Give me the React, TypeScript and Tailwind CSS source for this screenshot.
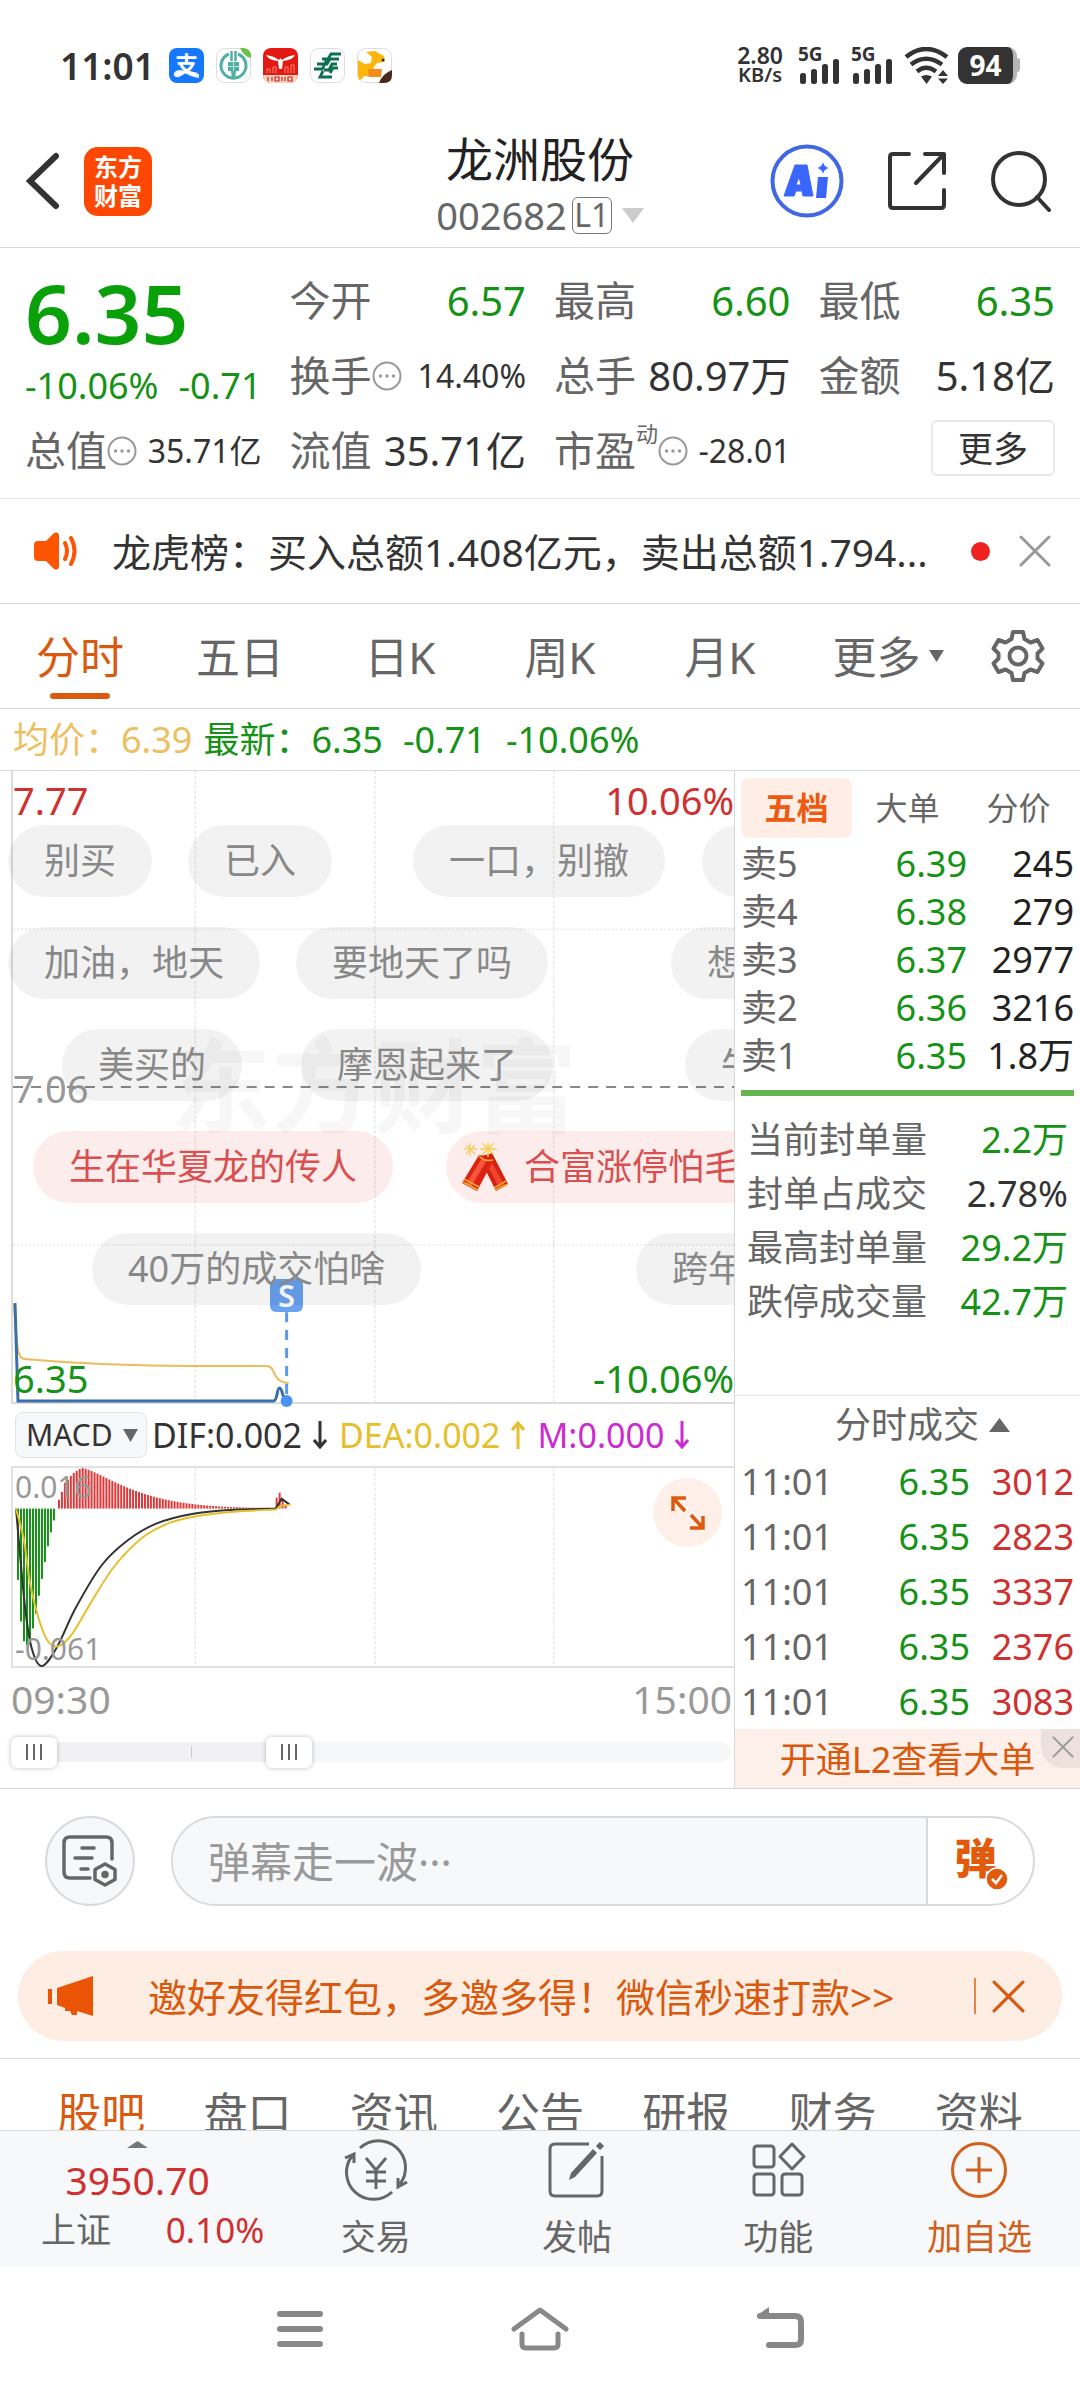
import { Fragment } from "react";
import classNames from "clsx";

const CHART_TABS = ["分时", "五日", "日K", "周K", "月K"];
const BOARD_TABS = ["股吧", "盘口", "资讯", "公告", "研报", "财务", "资料"];

const ASKS = [
  ["卖5", "6.39", "245"],
  ["卖4", "6.38", "279"],
  ["卖3", "6.37", "2977"],
  ["卖2", "6.36", "3216"],
  ["卖1", "6.35", "1.8万"],
];

const SEALS = [
  { label: "当前封单量", value: "2.2万", green: true },
  { label: "封单占成交", value: "2.78%", green: false },
  { label: "最高封单量", value: "29.2万", green: true },
  { label: "跌停成交量", value: "42.7万", green: true },
];

const TRADES = ["3012", "2823", "3337", "2376", "3083"];

const BULLETS = [
  { text: "别买", at: "left-[8px] top-[54px]" },
  { text: "已入", at: "left-[188px] top-[54px]" },
  { text: "一口，别撤", at: "left-[413px] top-[54px]" },
  { text: "", at: "left-[702px] top-[54px]" },
  { text: "加油，地天", at: "left-[8px] top-[156px]" },
  { text: "要地天了吗", at: "left-[296px] top-[156px]" },
  { text: "想", at: "left-[671px] top-[156px]" },
  { text: "美买的", at: "left-[62px] top-[258px]" },
  { text: "摩恩起来了", at: "left-[301px] top-[258px]" },
  { text: "牛", at: "left-[685px] top-[258px]" },
  { text: "生在华夏龙的传人", at: "left-[33px] top-[360px]", red: true },
  { text: "合富涨停怕毛", at: "left-[446px] top-[360px]", red: true, cracker: true },
  { text: "40万的成交怕啥", at: "left-[92px] top-[462px]" },
  { text: "跨年", at: "left-[636px] top-[462px]" },
];

const GREEN_BARS = [72, 114, 134, 138, 137, 121, 106, 88, 71, 54, 38, 24, 12];
const RED_RISE = [9, 17, 26, 29, 33, 36, 38, 40, 41];
const RED_BARS = [
  ...RED_RISE,
  ...Array.from({ length: 62 }, (_, n) => 41 * Math.exp(-Math.pow((n + 1) / 20.6, 1.33))),
];

const DIF = [
  [3, 41], [12, 140], [19, 183], [29, 200], [44, 181], [63, 141], [89, 98], [115, 73],
  [144, 56], [182, 46], [224, 42], [263, 41],
];
const DEA = [
  [3, 41], [11, 73], [17, 116], [26, 153], [35, 175], [45, 180], [59, 168], [78, 136],
  [101, 100], [130, 70], [158, 55], [182, 49], [224, 44], [263, 42],
];

// Catmull-Rom through the points
const smooth = (pts: number[][]) => {
  let d = `M${pts[0][0]} ${pts[0][1]}`;
  for (let i = 0; i < pts.length - 1; i++) {
    const a = pts[i - 1] || pts[i];
    const b = pts[i];
    const c = pts[i + 1];
    const e = pts[i + 2] || c;
    d += ` C${b[0] + (c[0] - a[0]) / 6} ${b[1] + (c[1] - a[1]) / 6} ${c[0] - (e[0] - b[0]) / 6} ${c[1] - (e[1] - b[1]) / 6} ${c[0]} ${c[1]}`;
  }
  return d;
};

export default function App() {
  return (
    <div className="w-full overflow-hidden bg-white font-['Noto_Sans','Noto_Sans_CJK_SC',sans-serif] text-[#333]">
      <StatusBar />
      <Header />
      <Quote />
      <Notice />
      <ChartTabs />
      <div className="flex h-[62px] items-center whitespace-pre border-b border-[#d8d8d8] px-[13px] text-[36px] leading-none text-[#169216]">
        <span className="mr-[11px] text-[#ecc05f]">均价：6.39</span>
        <span>最新：6.35</span>
        <span className="ml-[20px]">-0.71</span>
        <span className="ml-[20px]">-10.06%</span>
      </div>
      <main className="grid grid-cols-[735fr_345fr] border-b border-[#d8d8d8]">
        <Charts />
        <OrderBook />
      </main>
      <BulletInput />
      <Invite />
      <nav className="flex h-[72px] overflow-hidden border-t border-[#d8d8d8] px-[28px] pt-[24px]">
        {BOARD_TABS.map((t, i) => (
          <a
            key={t}
            href="#"
            className={classNames(
              "flex-1 text-center text-[44px] leading-[60px]",
              i === 0 ? "text-[#d9590f]" : "text-[#666]"
            )}
          >
            {t}
          </a>
        ))}
      </nav>
      <BottomBar />
      <SystemNav />
    </div>
  );
}

const StatusBar = () => (
  <div className="flex h-[130px] items-center justify-between pl-[60px] pr-[60px]">
    <div className="flex items-center gap-[12px]">
      <span className="mr-[2px] text-[37px] font-semibold leading-none">11:01</span>
      <svg className="h-[35px] w-[35px]" viewBox="0 0 35 35">
        <rect width="35" height="35" rx="8" fill="#1677ff" />
        <text x="17.500" y="25" textAnchor="middle" fontSize="23" fontWeight="700" fill="#fff">
          支
        </text>
        <path d="M5 25q3-5 11-2 8 3 14 3v4q-8-1-14-5-5 5-9 4-3-1-2-4z" fill="#fff" opacity=".9" />
      </svg>
      <svg className="h-[35px] w-[35px]" viewBox="0 0 35 35">
        <rect x=".5" y=".5" width="34" height="34" rx="8" fill="#fff" stroke="#ddd" />
        <path d="M13 6a12.500 12.500 0 1 0 9 0" fill="none" stroke="#4fb0a5" strokeWidth="3" />
        <path d="M15.500 3v10M19.500 3v10" fill="none" stroke="#4fb0a5" strokeWidth="2.500" />
        <path d="M12 14h11v9h-3l-1 8h-3l-1-8h-3z" fill="#4fb0a5" />
        <path d="M17.500 14v9M12 18.500h11" stroke="#bfe3de" strokeWidth="1" />
        <path d="M24 0h4q7 1 7 8v2Q28 9 24 0z" fill="#6cc04a" />
      </svg>
      <svg className="h-[35px] w-[35px]" viewBox="0 0 35 35">
        <rect width="35" height="35" rx="8" fill="#e21a12" />
        <path d="M0 27h35q0 8-8 8H8q-8 0-8-8z" fill="#f9d3bd" />
        <path d="M3 7q8 1 13 5l1.500-2 1.500 2q5-4 13-5-2 5-12 6l-1 8h-3l-1-8Q5 12 3 7z" fill="#fff" />
        <path d="M4 25v-4h3v4m3 0v-6h3v6m9 0v-6h3v6m3 0v-8h3v8" fill="none" stroke="#f6857b" />
        <path d="M5 29v4m4-4v4m3-4h4v4h-4zm7 0v4m3-4v4m3-4h4v4h-4z" stroke="#c22" fill="none" strokeWidth="1.200" />
      </svg>
      <svg className="h-[35px] w-[35px]" viewBox="0 0 35 35">
        <rect x=".5" y=".5" width="34" height="34" rx="8" fill="#fff" stroke="#ddd" />
        <path d="M31 6H21l-3 5h-6M29 11h-9l-3 5H7M27 16h-5l-3 6h-5M12 21H4M28 20h-5l-3 5M22 29H10l3-6M17 11l-5 11" fill="none" stroke="#0d7050" strokeWidth="2.800" />
      </svg>
      <svg className="h-[35px] w-[35px]" viewBox="0 0 35 35">
        <rect x=".5" y=".5" width="34" height="34" rx="8" fill="#fff" stroke="#ddd" />
        <path d="M1 12l7 4 6-1 1-6-6-5 9-1 9 5 1 4-1 2-7 1-3 4-3 10-7-1q-2 4-5 4l-1-5z" fill="#fbb60c" />
        <path d="M11 21h14l-1 8H12z" fill="#f68b1f" />
        <path d="M35 22v5q0 8-8 8h-5q3-9 13-13z" fill="#4a2a1c" />
        <circle cx="26" cy="12" r="1.500" fill="#333" />
      </svg>
    </div>
    <div className="flex items-center">
      <div className="mr-[15px] flex flex-col items-center font-semibold">
        <span className="text-[23px] leading-[20px]">2.80</span>
        <span className="text-[20px] leading-[20px]">KB/s</span>
      </div>
      <Signal />
      <Signal />
      <svg className="mr-[9px] h-[37px] w-[45px]" viewBox="0 0 45 37" fill="none" stroke="#333" strokeWidth="4.500">
        <path d="M2 10Q22 -6 43 10M7 17.500Q22 6 38 17.500M13 24.500Q22 17 32 24.500" />
        <path d="M17 29.500q5-3 11 0L22.500 37z" fill="#333" stroke="none" />
        <path d="M34 29h10l-5-6zM34 31.500h10l-5 5.500z" fill="#333" stroke="none" />
      </svg>
      <div className="flex h-[37px] w-[59px] items-center justify-center rounded-[9px] border-r-[4px] border-[#b5b5b5] bg-[#333] text-[28px] font-bold leading-none text-white">
        94
      </div>
      <div className="h-[14px] w-[3px] rounded-r bg-[#b5b5b5]" />
    </div>
  </div>
);

const Signal = () => (
  <svg className="mr-[11px] h-[37px] w-[42px] overflow-visible" viewBox="0 0 42 37" fill="#333">
    <text x="0" y="14" fontSize="19" fontWeight="700">
      5G
    </text>
    <rect x="2" y="26" width="6" height="11" rx="2.500" />
    <rect x="13" y="22" width="6" height="15" rx="2.500" />
    <rect x="24" y="17" width="6" height="20" rx="2.500" />
    <rect x="35" y="12" width="6" height="25" rx="2.500" />
  </svg>
);

const Header = () => (
  <header className="grid h-[118px] grid-cols-[1fr_auto_1fr] items-center border-b border-[#d8d8d8] pb-[5px]">
    <div className="flex items-center gap-[24px] pb-[10px] pl-[26px]">
      <button aria-label="返回">
        <svg className="h-[58px] w-[34px]" viewBox="0 0 34 58" fill="none" stroke="#333" strokeWidth="6" strokeLinecap="round">
          <path d="M30 4L4 29l26 25" />
        </svg>
      </button>
      <div className="flex h-[69px] w-[68px] flex-col items-center justify-center rounded-[14px] bg-[#fe4702] text-[24px] font-bold leading-[29px] text-white">
        <span>东方</span>
        <span>财富</span>
      </div>
    </div>
    <div className="flex flex-col items-center">
      <h1 className="text-[47px] leading-[58px] text-[#222]">龙洲股份</h1>
      <button className="flex h-[54px] items-center text-[38px] leading-none text-[#666]">
        002682
        <span className="ml-[5px] flex h-[37px] w-[40px] items-center justify-center rounded-[6px] border border-[#777] text-[32px] leading-none">
          L1
        </span>
        <svg className="ml-[10px] h-[15px] w-[22px]" viewBox="0 0 22 15">
          <path d="M0 0h22L11 15z" fill="#ccc" />
        </svg>
      </button>
    </div>
    <div className="flex items-center justify-end gap-[43px] pb-[10px] pr-[28px]">
      <button aria-label="AI">
        <svg className="h-[74px] w-[74px]" viewBox="0 0 74 74">
          <circle cx="37" cy="37" r="34.500" fill="#fff" stroke="#4068e4" strokeWidth="4" />
          <path
            fillRule="evenodd"
            d="M25 21h12l6 31H33l-1-5h-6l-2 5H14zm4 12l-3 8h5z"
            fill="#3a66fb"
            stroke="#3a66fb"
            strokeLinejoin="round"
          />
          <path d="M48 33h10l-2 21H46z" fill="#3a66fb" />
          <path d="M53 18q1 5 6 6-5 1-6 6-1-5-6-6 5-1 6-6z" fill="#3a66fb" />
        </svg>
      </button>
      <button aria-label="分享">
        <svg className="h-[60px] w-[60px]" viewBox="0 0 60 60" fill="none" stroke="#333" strokeWidth="4" strokeLinecap="round" strokeLinejoin="round">
          <path d="M22 3H6Q3 3 3 6v48q0 3 3 3h48q3 0 3-3V39M38 3h19v19M57 3L29 32" />
        </svg>
      </button>
      <button aria-label="搜索">
        <svg className="h-[62px] w-[62px]" viewBox="0 0 62 62" fill="none" stroke="#333" strokeWidth="4" strokeLinecap="round">
          <circle cx="29" cy="29" r="26" />
          <path d="M47 47l12 13" />
        </svg>
      </button>
    </div>
  </header>
);

const Dots = () => (
  <svg className="h-[30px] w-[30px] shrink-0" viewBox="0 0 30 30">
    <circle cx="15" cy="15" r="13.500" fill="none" stroke="#999" strokeWidth="2" />
    <g fill="#999">
      <circle cx="8.500" cy="15" r="1.700" />
      <circle cx="15" cy="15" r="1.700" />
      <circle cx="21.500" cy="15" r="1.700" />
    </g>
  </svg>
);

type StatProps = { label: string; value: string; green?: boolean; dots?: boolean; sup?: string };

const Stat = ({ label, value, green, dots, sup }: StatProps) => (
  <div className="flex h-[75px] items-center whitespace-nowrap leading-none">
    <span className="text-[41px] text-[#666]">{label}</span>
    {sup && <sup className="-top-[18px] text-[22px] leading-none text-[#666]">{sup}</sup>}
    {dots && <Dots />}
    <span
      className={classNames(
        "ml-auto",
        dots ? "text-[32px]" : "text-[40px]",
        green && "text-[#169216]"
      )}
    >
      {value}
    </span>
  </div>
);

const Quote = () => (
  <section className="grid grid-cols-4 gap-x-[28px] border-b border-[#e8e8e8] px-[25px] pb-[10px] pt-[15px]">
    <div className="row-span-2 text-[#0aa00a]">
      <div className="pt-[2px] text-[82px] font-semibold leading-[94px]">6.35</div>
      <div className="flex justify-between pt-[2px] text-[36px] leading-[50px] text-[#169216]">
        <span>-10.06%</span>
        <span>-0.71</span>
      </div>
    </div>
    <Stat label="今开" value="6.57" green />
    <Stat label="最高" value="6.60" green />
    <Stat label="最低" value="6.35" green />
    <Stat label="换手" value="14.40%" dots />
    <Stat label="总手" value="80.97万" />
    <Stat label="金额" value="5.18亿" />
    <Stat label="总值" value="35.71亿" dots />
    <Stat label="流值" value="35.71亿" />
    <Stat label="市盈" value="-28.01" dots sup="动" />
    <div className="flex items-start justify-end pt-[7px]">
      <button className="h-[56px] w-[124px] rounded-[6px] border-2 border-[#e8e8e8] text-[35px] leading-none">更多</button>
    </div>
  </section>
);

const Cross = ({ className }: { className?: string }) => (
  <svg className={className} viewBox="0 0 32 32" fill="none" stroke="currentColor" strokeWidth="3" strokeLinecap="round">
    <path d="M2 2l28 28M30 2L2 30" />
  </svg>
);

const Notice = () => (
  <div className="flex h-[105px] items-center border-b border-[#d8d8d8] pl-[34px] pr-[29px]">
    <svg className="mr-[33px] h-[38px] w-[45px] shrink-0" viewBox="0 0 45 38">
      <path d="M4 9h8L20 1q5-2 5 3v30q0 5-5 3l-8-8H4q-4 0-4-4V13q0-4 4-4z" fill="#fe5502" />
      <path d="M31 11q4 8 0 16M37 6q7 13 0 26" fill="none" stroke="#fe5502" strokeWidth="4" strokeLinecap="round" />
    </svg>
    <p className="min-w-0 whitespace-nowrap text-[39px] leading-none">龙虎榜：买入总额1.408亿元，卖出总额1.794...</p>
    <span className="ml-auto mr-[29px] h-[19px] w-[19px] shrink-0 rounded-full bg-[#ee2020]" />
    <button aria-label="关闭" className="shrink-0 text-[#999]">
      <Cross className="h-[32px] w-[32px]" />
    </button>
  </div>
);

const ChartTabs = () => (
  <nav className="flex h-[105px] border-b border-[#d8d8d8] pr-[20px] text-[44px] leading-none text-[#666]">
    {CHART_TABS.map((t, i) => (
      <button
        key={t}
        className={classNames("flex flex-[160] flex-col items-center pt-[31px]", i === 0 && "text-[#d9590f]")}
      >
        <span className="h-[48px]">{t}</span>
        {i === 0 && <span className="mt-[10px] h-[6px] w-[60px] rounded-full bg-[#dc5a10]" />}
      </button>
    ))}
    <button className="flex flex-[176] items-start justify-center gap-[8px] pt-[31px]">
      更多
      <svg className="mt-[15px] h-[12px] w-[15px]" viewBox="0 0 15 12">
        <path d="M0 0h15L7.500 12z" fill="#666" />
      </svg>
    </button>
    <button aria-label="设置" className="flex flex-[84] items-center justify-center">
      <svg className="h-[54px] w-[54px]" viewBox="0 0 54 54" fill="none" stroke="#666" strokeWidth="4" strokeLinejoin="round">
        <path d="M22 3h10l1.500 7 6 3.500 7-2.500 5 8.500-5 5v5l5 5-5 8.500-7-2.500-6 3.500L32 51H22l-1.500-7-6-3.500-7 2.500-5-8.500 5-5v-5l-5-5 5-8.500 7 2.500 6-3.500z" />
        <circle cx="27" cy="27" r="8.500" />
      </svg>
    </button>
  </nav>
);

const Cracker = () => (
  <svg className="-ml-[20px] mr-[14px] h-[48px] w-[48px] shrink-0" viewBox="0 0 48 48">
    <path d="M17 14l13-4 16 31-12 7z" fill="#d6200f" />
    <path d="M24 20l5-2 14 25-5 3z" fill="#f0442e" />
    <path d="M17 12q8 0 14 6L15 48 0 40z" fill="#dc2212" />
    <path d="M20 15l5 2L9 44l-5-3z" fill="#f75540" />
    <path d="M2 36l15 8M1 39l15 8M32 45l12-7M33 47l13-6M17 13q6 6 14 4" fill="none" stroke="#f0a92c" strokeWidth="1.500" />
    <circle cx="26" cy="6" r="5" fill="#fff0a8" />
    <path d="M26-2V14M18 6h17M20 0l12 12M32 0L20 12M8 0v13M2 6h13M4 2l9 9M13 2l-9 9" stroke="#f5d06a" strokeWidth="1.500" />
  </svg>
);

const Grid = ({ height }: { height: number }) => (
  <path
    d={`M182.500 0V${height}M362.500 0V${height}M541.500 0V${height}`}
    stroke="#ddd"
    strokeDasharray="3 2"
  />
);

const ARROW = "ml-[11px] mr-[12px] h-[28px] w-[14px]";

const Charts = () => (
  <div className="relative min-w-0 overflow-hidden border-r border-[#d8d8d8]">
    <div className="pl-[11px]">
      <div className="relative h-[633px] border-b-2 border-l-2 border-[#dcdcdc]">
        <div className="absolute inset-x-0 top-[260px] text-center text-[102px] font-bold leading-[110px] text-black/[0.03]">
          东方财富
        </div>
        <svg className="absolute inset-0 h-full w-full overflow-visible" viewBox="0 0 722 632" preserveAspectRatio="none" fill="none">
          <Grid height={632} />
          <path d="M0 158.500H722M0 474.500H722" stroke="#ddd" strokeDasharray="2 2" />
          <path d="M0 316.500H722" stroke="#888" strokeWidth="2" strokeDasharray="10 8" />
          <path d="M1 533C3 560 3 589 11 589Q90 596 181 596H254C264 596 258 612 276 613" stroke="#ecbb5a" strokeWidth="2" />
          <path d="M2 533L5 631H261C265 631 264 618 267 618S270 631 274 631" stroke="#3a6ea8" strokeWidth="3" />
          <path d="M274 542V626" stroke="#5a9af0" strokeWidth="3" strokeDasharray="10 8" />
          <circle cx="274" cy="631" r="6" fill="#4a90f5" />
        </svg>
        <div className="absolute inset-x-0 top-[4px] flex justify-between text-[38px] leading-[50px] text-[#cf3030]">
          <span>7.77</span>
          <span>10.06%</span>
        </div>
        <div className="absolute left-0 top-[292px] text-[38px] leading-[50px] text-[#999]">7.06</div>
        <div className="absolute inset-x-0 top-[582px] flex justify-between text-[38px] leading-[50px] text-[#169216]">
          <span>6.35</span>
          <span>-10.06%</span>
        </div>
        <div className="absolute left-[257px] top-[508px] h-[33px] w-[33px] rounded-[6px] bg-[#69a2f0] text-center text-[31px] font-semibold leading-[33px] text-white">
          S
        </div>
      </div>

      <div className="flex h-[62px] items-center whitespace-nowrap text-[34px] leading-none">
        <label className="relative ml-[4px] mr-[5px]">
          <select aria-label="指标" className="h-[46px] w-[132px] appearance-none rounded-[8px] border border-[#e2e4e8] bg-[#f7f8fa] pl-[10px] text-[30px] leading-none">
            <option>MACD</option>
          </select>
          <svg className="pointer-events-none absolute right-[9px] top-[17px] h-[13px] w-[15px]" viewBox="0 0 15 13">
            <path d="M0 0h15L7.500 13z" fill="#666" />
          </svg>
        </label>
        <span>DIF:0.002</span>
        <svg className={ARROW} viewBox="0 0 14 28" fill="none" stroke="#333" strokeWidth="3">
          <path d="M7 0v26M1 19l6 7 6-7" />
        </svg>
        <span className="text-[#e6c02c]">DEA:0.002</span>
        <svg className={ARROW} viewBox="0 0 14 28" fill="none" stroke="#e6c02c" strokeWidth="3">
          <path d="M7 28V2M1 9l6-7 6 7" />
        </svg>
        <span className="text-[#cb2bd0]">M:0.000</span>
        <svg className={ARROW} viewBox="0 0 14 28" fill="none" stroke="#cb2bd0" strokeWidth="3">
          <path d="M7 0v26M1 19l6 7 6-7" />
        </svg>
      </div>

      <div className="relative h-[202px] border-y-2 border-l-2 border-[#e2e2e2]">
        <svg className="absolute inset-0 h-full w-full overflow-visible" viewBox="0 0 722 200" preserveAspectRatio="none" fill="none">
          <Grid height={200} />
          {GREEN_BARS.map((h, i) => (
            <rect key={i} x={4 + i * 3} y="41" width="2" height={h} fill="#169216" />
          ))}
          {RED_BARS.map((h, i) => (
            <rect key={i} x={45 + i * 2.97} y={41 - h} width="2" height={h} fill="#dc3a3a" />
          ))}
          <path d="M264 41V30M267 41V25M270 41V32M273 41V37" stroke="#dc3a3a" strokeWidth="2" />
          <path d={`${smooth(DIF)}L269 31L277 37`} stroke="#333" strokeWidth="2" />
          <path d={`${smooth(DEA)}L269 38L278 37`} stroke="#e6c02c" strokeWidth="2" />
        </svg>
        <div className="absolute left-[2px] top-[4px] text-[30px] leading-[30px] text-[#999]">0.016</div>
        <div className="absolute bottom-[2px] left-[2px] text-[30px] leading-[30px] text-[#999]">-0.061</div>
        <button aria-label="全屏" className="absolute right-[12px] top-[10px] flex h-[69px] w-[69px] items-center justify-center rounded-full bg-[#fef0e8]">
          <svg className="h-[34px] w-[34px]" viewBox="0 0 34 34" fill="none" stroke="#dc5a10" strokeWidth="3.500">
            <path d="M2 15V2h13M2 2l12 13M32 20v12H19M32 32L20 19" />
          </svg>
        </button>
      </div>

      <div className="mb-[8px] flex h-[60px] items-center justify-between pr-[2px] text-[39px] leading-none text-[#999]">
        <span>09:30</span>
        <span>15:00</span>
      </div>

      <div className="relative mb-[20px] mr-[3px] h-[32px]">
        <div className="absolute inset-x-0 top-[6px] h-[20px] rounded-full bg-[#f6f7f9]" />
        <div className="absolute left-[10px] top-[6px] h-[20px] w-[37%] bg-[#f1f1f3]" />
        <div className="absolute left-[25%] top-[10px] h-[12px] w-px bg-[#ccc]" />
        <Handle label="起点" value={0} />
        <Handle label="终点" value={378} />
      </div>
    </div>

    {BULLETS.map((b) => (
      <div
        key={b.at}
        className={classNames(
          "absolute flex h-[72px] items-center whitespace-nowrap rounded-full px-[36px] text-[36px] leading-none",
          b.at,
          b.red ? "bg-[#f04040]/10 text-[#d85050]" : "bg-black/5 text-[#888]"
        )}
      >
        {b.cracker && <Cracker />}
        {b.text}
      </div>
    ))}
  </div>
);

const Handle = ({ label, value }: { label: string; value: number }) => (
  <input
    type="range"
    aria-label={label}
    min={0}
    max={1000}
    defaultValue={value}
    className="pointer-events-none absolute inset-0 h-[32px] w-full appearance-none bg-transparent [&::-webkit-slider-thumb]:pointer-events-auto [&::-webkit-slider-thumb]:h-[31px] [&::-webkit-slider-thumb]:w-[46px] [&::-webkit-slider-thumb]:appearance-none [&::-webkit-slider-thumb]:rounded-[6px] [&::-webkit-slider-thumb]:bg-white [&::-webkit-slider-thumb]:bg-[linear-gradient(90deg,transparent_15px,#666_15px,#666_17px,transparent_17px,transparent_22px,#666_22px,#666_24px,transparent_24px,transparent_29px,#666_29px,#666_31px,transparent_31px)] [&::-webkit-slider-thumb]:bg-[length:46px_16px] [&::-webkit-slider-thumb]:bg-center [&::-webkit-slider-thumb]:bg-no-repeat [&::-webkit-slider-thumb]:shadow-[0_0_5px_rgba(0,0,0,0.25)]"
  />
);

const OrderBook = () => (
  <aside className="flex min-w-0 flex-col">
    <div className="flex px-[6px] pt-[7px] text-[32px] leading-none text-[#666]">
      <button className="h-[60px] flex-1 rounded-[8px] bg-[#feeee6] font-bold text-[#ee5a10]">五档</button>
      <button className="h-[60px] flex-1">大单</button>
      <button className="h-[60px] flex-1">分价</button>
    </div>
    <table className="mx-[6px] mt-[2px] text-[36px] leading-none">
      <tbody>
        {ASKS.map(([side, price, volume]) => (
          <tr key={side} className="h-[48px]">
            <th className="w-[100px] p-0 text-left font-normal text-[#666]">{side}</th>
            <td className="p-0 text-right text-[#169216]">{price}</td>
            <td className="w-[107px] whitespace-nowrap p-0 text-right text-[#222]">{volume}</td>
          </tr>
        ))}
      </tbody>
    </table>
    <div className="mx-[6px] mt-[10px] h-[6px] bg-[#65b550]" />
    <dl className="mb-[66px] mt-[17px] grid grid-cols-[auto_1fr] pl-[12px] pr-[12px] text-[36px] leading-[54px]">
      {SEALS.map((s) => (
        <Fragment key={s.label}>
          <dt className="h-[54px] text-[#666]">{s.label}</dt>
          <dd className={classNames("h-[54px] text-right", s.green && "text-[#169216]")}>{s.value}</dd>
        </Fragment>
      ))}
    </dl>
    <button className="flex h-[59px] items-center justify-center gap-[10px] border-t border-[#e6e6e6] pl-[30px] text-[36px] leading-none text-[#666]">
      分时成交
      <svg className="h-[14px] w-[21px]" viewBox="0 0 21 14">
        <path d="M10.500 0L21 14H0z" fill="#666" />
      </svg>
    </button>
    <table className="mx-[6px] text-[36px] leading-none">
      <tbody>
        {TRADES.map((v) => (
          <tr key={v} className="h-[55px]">
            <td className="p-0 text-[#666]">11:01</td>
            <td className="p-0 text-right text-[#169216]">6.35</td>
            <td className="w-[104px] p-0 text-right text-[#cf3030]">{v}</td>
          </tr>
        ))}
      </tbody>
    </table>
    <div className="relative mt-auto flex h-[59px] items-center justify-center bg-[#fdf0ea] pt-[2px]">
      <a href="#" className="text-[36px] leading-none text-[#d9590f]">
        开通L2查看大单
      </a>
      <button
        aria-label="关闭"
        className="absolute right-0 top-0 flex h-[39px] w-[39px] items-center justify-center rounded-bl-[22px] bg-[#ece1dc] pl-[4px] pb-[4px] text-[#999]"
      >
        <Cross className="h-[22px] w-[22px]" />
      </button>
    </div>
  </aside>
);

const BulletInput = () => (
  <div className="flex items-center gap-[36px] px-[45px] pb-[45px] pt-[27px]">
    <button aria-label="弹幕设置" className="flex h-[90px] w-[90px] shrink-0 items-center justify-center rounded-full border-2 border-[#d8dadd] bg-[#f7f8fa]">
      <svg className="h-[52px] w-[56px]" viewBox="0 0 56 52" fill="none" stroke="#666" strokeWidth="3.500" strokeLinecap="round">
        <path d="M28 43H8q-6 0-6-6V8q0-6 6-6h36q6 0 6 6v16" />
        <path d="M20 13h12M13 23h17M19 34h7" />
        <path d="M43 29l10 5.500v10L43 50l-10-5.500v-10z" strokeLinejoin="round" />
        <circle cx="43" cy="39.500" r="2" fill="#666" />
      </svg>
    </button>
    <div className="flex h-[90px] flex-1 overflow-hidden rounded-full border-2 border-[#d8dadd]">
      <input
        aria-label="弹幕"
        placeholder="弹幕走一波···"
        className="min-w-0 flex-1 bg-[#f7f8fa] pl-[35px] text-[42px] placeholder:text-[#999] placeholder:opacity-100"
      />
      <button className="relative w-[107px] border-l-2 border-[#d8dadd] pr-[10px] pb-[6px] text-[42px] font-black leading-none text-[#e25a0c]">
        弹
        <svg className="absolute left-[57px] top-[49px] h-[24px] w-[24px]" viewBox="0 0 24 24">
          <circle cx="12" cy="12" r="11" fill="#e25a0c" stroke="#fff" strokeWidth="1.500" />
          <path d="M7 12l4 4 6-8" fill="none" stroke="#fff" strokeWidth="2.500" />
        </svg>
      </button>
    </div>
  </div>
);

const Invite = () => (
  <div className="mx-[18px] mb-[17px] flex h-[90px] items-center rounded-full bg-[#fdede3] pl-[30px] pr-[37px] text-[#d9590f]">
    <svg className="mr-[55px] h-[40px] w-[45px] shrink-0" viewBox="0 0 45 40" fill="#e95504">
      <path d="M0 13h4v15H0zM9 12L45 0v40l-16-5v4h-5l-2-4h-5v-3l-8-3z" />
    </svg>
    <a href="#" className="whitespace-nowrap text-[39px] leading-none">
      邀好友得红包，多邀多得！微信秒速打款&gt;&gt;
    </a>
    <span className="ml-auto mr-[16px] h-[36px] w-[2px] bg-[#d9590f]/70" />
    <button aria-label="关闭">
      <Cross className="h-[33px] w-[33px]" />
    </button>
  </div>
);

const BottomBar = () => (
  <footer className="flex h-[136px] border-t border-[#d8d8d8] bg-[#f7f8fa] text-[34px] leading-none text-[#666]">
    <button className="flex flex-[275] flex-col items-center pt-[10px]">
      <svg className="h-[7px] w-[21px]" viewBox="0 0 21 7">
        <path d="M10.500 0L21 7H0z" fill="#777" />
      </svg>
      <span className="mt-[7px] text-[39px] leading-[50px] text-[#cf3030]">3950.70</span>
      <span className="flex w-full justify-between pl-[41px] pr-[11px] text-[35px] leading-[50px]">
        上证 <span className="text-[#cf3030]">0.10%</span>
      </span>
    </button>
    <Action label="交易">
      <path d="M16 7A27 27 0 0 1 56 43M48 51A27 27 0 0 1 8 15M1 17l9-4v9M63 41l-9 5v-9" />
      <path d="M22 17l10 12 10-12M32 29v19M22 31h20M22 40h20" />
    </Action>
    <Action label="发帖">
      <path d="M44 3H10q-5 0-5 5v42q0 5 5 5h42q5 0 5-5V15" />
      <path d="M24 39l2-7 22-24 4 4-22 24z" fill="currentColor" stroke="none" />
      <path d="M53 7l4-4" strokeWidth="6" />
    </Action>
    <Action label="功能">
      <rect x="8" y="5" width="20" height="21" rx="3" />
      <rect x="8" y="33" width="20" height="21" rx="3" />
      <rect x="36" y="33" width="20" height="21" rx="3" />
      <path d="M46 3l12 12.500L46 28 34 15.500z" strokeLinejoin="round" />
    </Action>
    <Action label="加自选" orange>
      <circle cx="32" cy="29" r="26.500" />
      <path d="M19 29h26M32 16v26" />
    </Action>
  </footer>
);

const Action = ({ label, orange, children }: { label: string; orange?: boolean; children: React.ReactNode }) => (
  <button className={classNames("flex flex-[201] flex-col items-center pt-[10px]", orange && "text-[#d0601e]")}>
    <svg className="h-[58px] w-[64px] overflow-visible" viewBox="0 0 64 58" fill="none" stroke="currentColor" strokeWidth="3">
      {children}
    </svg>
    <span className="mt-[18px] text-[35px] leading-[40px]">{label}</span>
  </button>
);

const SystemNav = () => (
  <div className="grid h-[126px] grid-cols-3 place-items-center px-[180px]">
    <button aria-label="任务">
      <svg className="h-[44px] w-[48px]" viewBox="0 0 48 44" stroke="#888" strokeWidth="6" strokeLinecap="round">
        <path d="M4 7h40M4 22h40M4 37h40" />
      </svg>
    </button>
    <button aria-label="主页">
      <svg className="h-[44px] w-[58px]" viewBox="0 0 58 44" fill="none" stroke="#888" strokeWidth="5" strokeLinecap="round" strokeLinejoin="round">
        <path d="M3 22L29 3l26 19M11 27v10q0 4 4 4h28q4 0 4-4V27" />
      </svg>
    </button>
    <button aria-label="后退">
      <svg className="h-[44px] w-[50px]" viewBox="0 0 50 44" fill="none" stroke="#888" strokeWidth="6" strokeLinecap="round">
        <path d="M5 9h35q6 0 6 6v18q0 5-6 5H14" />
        <path d="M1 9L14 0v9z" fill="#888" stroke="none" />
      </svg>
    </button>
  </div>
);
